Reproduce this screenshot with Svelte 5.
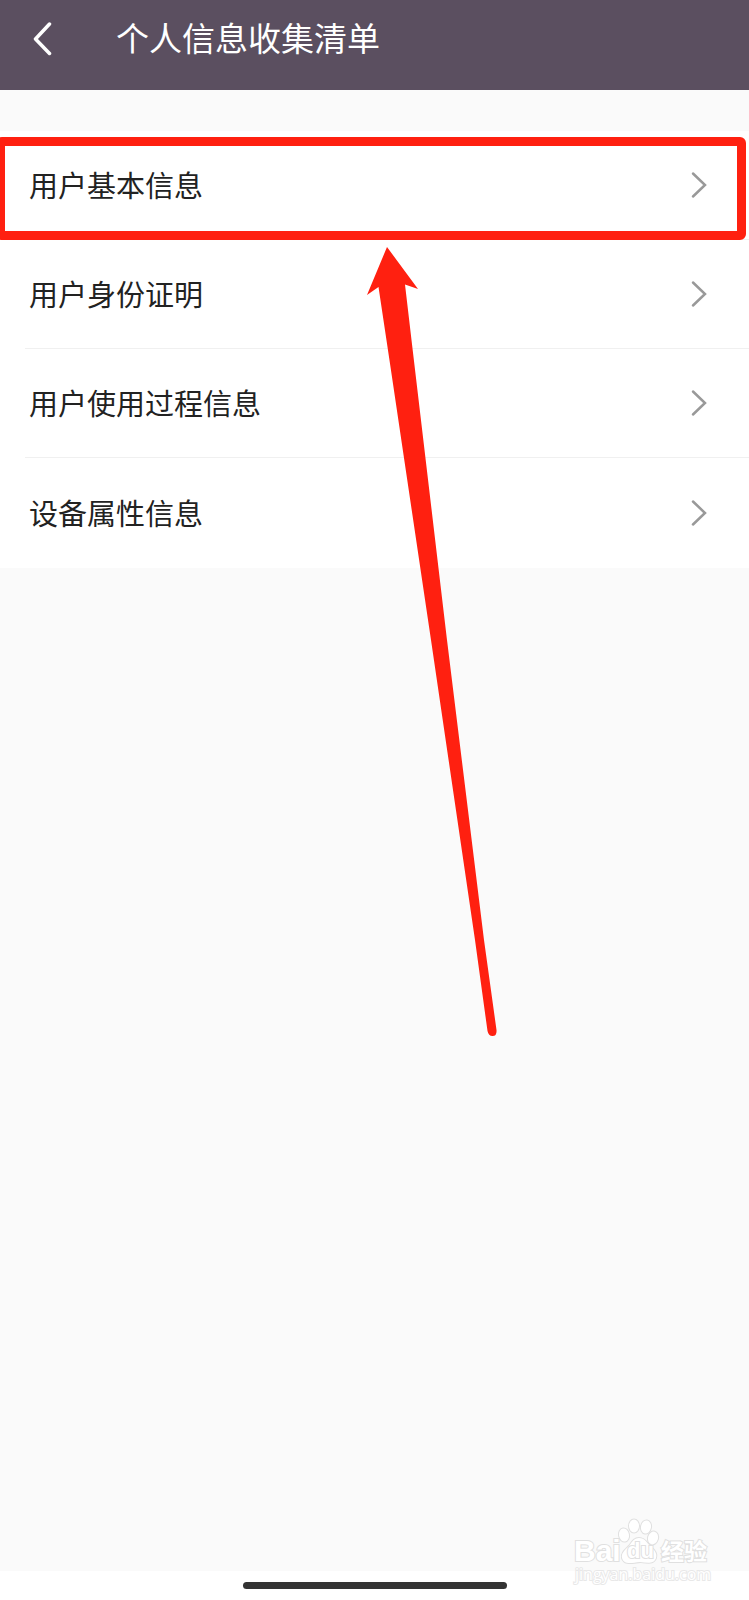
<script lang="ts">
	const Title = '个人信息收集清单';

	const Items = [
		{ Label: '用户基本信息', Href: '#basic', Marked: true },
		{ Label: '用户身份证明', Href: '#identity', Marked: false },
		{ Label: '用户使用过程信息', Href: '#usage', Marked: false },
		{ Label: '设备属性信息', Href: '#device', Marked: false }
	];
</script>

<div class="page">
	<header class="header">
		<button class="back" aria-label="返回">
			<svg width="20" height="34" viewBox="0 0 20 34">
				<path d="M17.500 2 L3.500 17 L17.500 31.500" />
			</svg>
		</button>
		<h1>{Title}</h1>
	</header>

	<main class="content">
		<nav class="list">
			{#each Items as Item}
				<a class="row" class:marked={Item.Marked} href={Item.Href}>
					<span class="label">{Item.Label}</span>
					<svg class="chevron" width="16" height="28" viewBox="0 0 16 28">
						<path d="M2 2.500 L14 14 L2 25.500" />
					</svg>
				</a>
			{/each}
		</nav>
	</main>

	<footer class="footer">
		<div class="home-bar"></div>
	</footer>

	<!-- Pointer to the first row -->
	<svg class="arrow" width="132" height="792" viewBox="0 0 132 792">
		<path
			d="M21 0 L52 42 L39 37.500 L45.500 93 L81 393 L118 693 L130.500 783 Q131 789 126.500 789 Q122.500 789 121.500 784 L109 693 L65 393 L24.500 120 L12.500 40 L1 48 Z"
		/>
	</svg>

	<!-- Watermark -->
	<svg class="watermark" width="144" height="72" viewBox="0 0 144 72">
		<g class="logo">
			<text x="4" y="45" class="latin">Bai</text>
			<ellipse cx="54" cy="19" rx="5" ry="6.500" transform="rotate(-10 54 19)" />
			<ellipse cx="64" cy="10" rx="5" ry="6.500" />
			<ellipse cx="76" cy="11" rx="5" ry="6.500" transform="rotate(10 76 11)" />
			<ellipse cx="83" cy="22" rx="5" ry="6.500" transform="rotate(15 83 22)" />
			<path
				d="M69 22 C75 22 77 27 81 31 C86 35 87 39 86 42 C84 48 78 47 70 46 C61 47 54 49 52 42 C51 37 55 34 59 30 C62 26 64 22 69 22 Z"
			/>
			<text x="57" y="42" class="du">du</text>
			<text x="91" y="44" class="cjk">经验</text>
		</g>
		<text x="5" y="64" class="site">jingyan.baidu.com</text>
	</svg>
</div>

<style>
	:global(body) {
		background: #fafafa;
	}

	.page {
		position: relative;
		min-height: 100vh;
		display: flex;
		flex-direction: column;
		overflow: hidden;
		background: #fafafa;
		color: #222;
		font-family: 'Noto Sans CJK SC', sans-serif;
	}

	/* Header */
	.header {
		display: flex;
		align-items: center;
		gap: 64px;
		height: 90px;
		padding: 0 32px 12px;
		box-sizing: border-box;
		background: #5b4f60;
		color: #fff;
	}

	.back {
		display: flex;
		padding: 0;
		border: 0;
		background: none;
		cursor: pointer;
	}

	.back path {
		fill: none;
		stroke: #fff;
		stroke-width: 3.5;
		stroke-linecap: round;
		stroke-linejoin: round;
	}

	h1 {
		margin: 0;
		padding-bottom: 4px;
		font-size: 33px;
		font-weight: 400;
		line-height: 40px;
		white-space: nowrap;
	}

	/* List */
	.content {
		flex-grow: 1;
		padding-top: 41px;
	}

	.list {
		background: #fff;
	}

	.row {
		position: relative;
		display: flex;
		align-items: center;
		justify-content: space-between;
		height: 109px;
		margin-left: 25px;
		padding: 0 42px 0 4px;
		box-sizing: border-box;
		border-bottom: 1px solid #f0f0f0;
		color: inherit;
		text-decoration: none;
	}

	.row:last-child {
		height: 110px;
		border-bottom: 0;
	}

	.label {
		padding-bottom: 3px;
		font-size: 29px;
		line-height: 40px;
	}

	.chevron path {
		fill: none;
		stroke: #999;
		stroke-width: 2.5;
		stroke-linecap: round;
	}

	.marked::after {
		content: '';
		position: absolute;
		top: 6px;
		right: 3px;
		bottom: -1px;
		left: -29px;
		border: 9px solid #ff2010;
		border-radius: 6px;
	}

	/* Bottom bar */
	.footer {
		display: flex;
		justify-content: center;
		padding: 11px 0;
		background: #fff;
	}

	.home-bar {
		width: 264px;
		height: 7px;
		border-radius: 4px;
		background: #333;
	}

	/* Overlays */
	.arrow {
		position: absolute;
		top: 247px;
		left: 366px;
		fill: #ff2010;
		pointer-events: none;
	}

	.watermark {
		position: absolute;
		right: 35px;
		bottom: 12px;
		pointer-events: none;
	}

	.logo {
		fill: #fff;
		stroke: #e0e0e0;
		stroke-width: 2;
		paint-order: stroke;
	}

	.latin {
		font: 700 30px 'Liberation Sans', sans-serif;
	}

	.du {
		font: 700 22px 'Liberation Sans', sans-serif;
	}

	.cjk {
		font: 700 23px 'Noto Sans CJK SC', sans-serif;
	}

	.site {
		font: 400 16px 'Open Sans', sans-serif;
		fill: #fff;
		stroke: #e8e8e8;
		stroke-width: 2;
		paint-order: stroke;
	}
</style>
